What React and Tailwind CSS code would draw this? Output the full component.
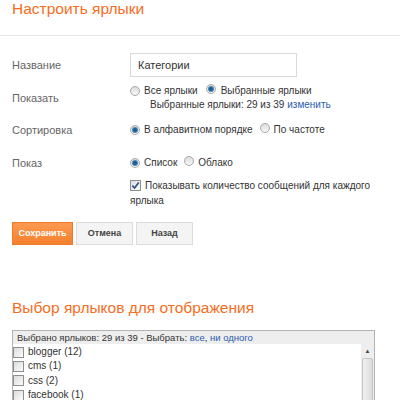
import React from "react";

const font = { fontFamily: '"Liberation Sans", Arial, sans-serif' };

function Radio({ checked }) {
  return (
    <span className="relative inline-block w-[10px] h-[10px] rounded-full border border-[#a9a9a9] bg-gradient-to-b from-[#dcdcdc] to-[#f8f8f8] shrink-0">
      {checked && (
        <span className="absolute left-[2px] top-[2px] w-[4px] h-[4px] rounded-full bg-[#1d5f92] ring-1 ring-[#4a86b8]" />
      )}
    </span>
  );
}

function Check({ checked }) {
  return (
    <span className="relative inline-flex items-center justify-center w-[11px] h-[11px] border border-[#8e8f8f] bg-gradient-to-br from-[#dcdcdc] to-[#fbfbfb] shrink-0">
      {checked && (
        <svg width="9" height="9" viewBox="0 0 10 10">
          <path d="M1.5 5.2 L4 7.8 L8.6 1.6" fill="none" stroke="#2b4f86" strokeWidth="1.8" />
        </svg>
      )}
    </span>
  );
}

const labels = [
  "blogger (12)",
  "cms (1)",
  "css (2)",
  "facebook (1)",
];

export default function App() {
  return (
    <div className="w-[400px] h-[400px] overflow-hidden bg-white text-[#333]" style={font}>
      <h1 className="pl-[12px] h-[35px] text-[15.5px] leading-[18px] text-[#f76d1e]">Настроить ярлыки</h1>
      <div className="h-px bg-[#e6e6e6]" />

      <div className="pl-[12px] pt-[17px] text-[11px]">
        {/* Название */}
        <div className="flex items-center h-[24px]">
          <div className="w-[118px] text-[#666]">Название</div>
          <div className="w-[167px] h-[24px] border border-[#d9d9d9] flex items-center pl-[7px] text-[11px] text-[#333]">Категории</div>
        </div>

        {/* Показать */}
        <div className="flex mt-[7px]">
          <div className="w-[118px] text-[#666] pt-[7px] leading-[14px]">Показать</div>
          <div className="text-[10px] leading-[14px]">
            <div className="flex items-center">
              <Radio />
              <span className="ml-[4px]">Все ярлыки</span>
              <span className="ml-[8px]"><Radio checked /></span>
              <span className="ml-[5px]">Выбранные ярлыки</span>
            </div>
            <div className="pl-[20px]">
              Выбранные ярлыки: 29 из 39 <span className="text-[#2a5db0]">изменить</span>
            </div>
          </div>
        </div>

        {/* Сортировка */}
        <div className="flex items-center mt-[11px] leading-[14px]">
          <div className="w-[118px] text-[#666]">Сортировка</div>
          <div className="flex items-center text-[10px]">
            <Radio checked />
            <span className="ml-[4px]">В алфавитном порядке</span>
            <span className="ml-[7px]"><Radio /></span>
            <span className="ml-[4px]">По частоте</span>
          </div>
        </div>

        {/* Показ */}
        <div className="flex items-center mt-[19px] leading-[14px]">
          <div className="w-[118px] text-[#666]">Показ</div>
          <div className="flex items-center text-[10px]">
            <Radio checked />
            <span className="ml-[4px]">Список</span>
            <span className="ml-[7px]"><Radio /></span>
            <span className="ml-[4px]">Облако</span>
          </div>
        </div>

        <div className="flex mt-[8px]">
          <div className="w-[118px]" />
          <div className="w-[245px] text-[10px] leading-[15px]">
            <span className="inline-flex align-[-1px] mr-[4px]"><Check checked /></span>
            Показывать количество сообщений для каждого ярлыка
          </div>
        </div>

        {/* Buttons */}
        <div className="flex gap-[3px] mt-[14px]">
          <button className="w-[61px] h-[23px] bg-gradient-to-b from-[#fb9a4f] to-[#f4802e] border border-[#f07a26] text-white text-[9px] font-bold">Сохранить</button>
          <button className="w-[57px] h-[23px] bg-[#f4f4f4] border border-[#dcdcdc] text-[#444] text-[9px] font-bold">Отмена</button>
          <button className="w-[57px] h-[23px] bg-[#f4f4f4] border border-[#dcdcdc] text-[#444] text-[9px] font-bold">Назад</button>
        </div>
      </div>

      <h2 className="pl-[12px] mt-[54px] text-[15.5px] leading-[18px] text-[#f76d1e]">Выбор ярлыков для отображения</h2>

      <div className="ml-[12px] mt-[13px] w-[363px] border border-[#b3b3b3] bg-[#eeeeee]">
        <div className="h-[13px] pl-[4px] text-[9.5px] leading-[13px] text-[#333]">
          Выбрано ярлыков: 29 из 39 - Выбрать: <span className="text-[#2a5db0]">все</span>, <span className="text-[#2a5db0]">ни одного</span>
        </div>
        <div className="flex">
          <div className="flex-1 bg-white text-[10px] leading-[14px] pt-[1px]">
            {labels.map((l) => (
              <div key={l} className="flex items-center gap-[4px] h-[14.3px]">
                <Check />
                <span>{l}</span>
              </div>
            ))}
          </div>
          <div className="w-[13px] flex flex-col items-center">
            <div className="h-[14px] flex items-center justify-center text-[#444] text-[6px]">▲</div>
            <div className="w-[11px] h-[60px] border border-[#c4c4c4] rounded-[2px] bg-gradient-to-r from-[#f0f0f0] to-[#dcdcdc]" />
          </div>
        </div>
      </div>
    </div>
  );
}
